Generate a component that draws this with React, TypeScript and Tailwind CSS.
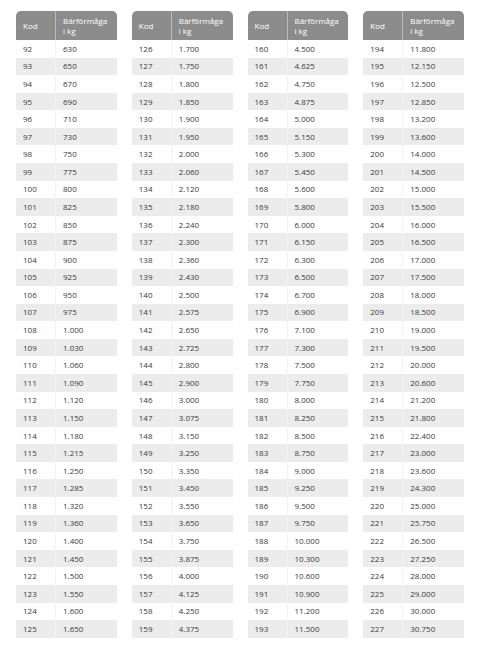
const tables: [number, string[]][] = [
  [92, ["630", "650", "670", "690", "710", "730", "750", "775", "800", "825", "850", "875", "900", "925", "950", "975", "1.000", "1.030", "1.060", "1.090", "1.120", "1.150", "1.180", "1.215", "1.250", "1.285", "1.320", "1.360", "1.400", "1.450", "1.500", "1.550", "1.600", "1.650"]],
  [126, ["1.700", "1.750", "1.800", "1.850", "1.900", "1.950", "2.000", "2.060", "2.120", "2.180", "2.240", "2.300", "2.360", "2.430", "2.500", "2.575", "2.650", "2.725", "2.800", "2.900", "3.000", "3.075", "3.150", "3.250", "3.350", "3.450", "3.550", "3.650", "3.750", "3.875", "4.000", "4.125", "4.250", "4.375"]],
  [160, ["4.500", "4.625", "4.750", "4.875", "5.000", "5.150", "5.300", "5.450", "5.600", "5.800", "6.000", "6.150", "6.300", "6.500", "6.700", "6.900", "7.100", "7.300", "7.500", "7.750", "8.000", "8.250", "8.500", "8.750", "9.000", "9.250", "9.500", "9.750", "10.000", "10.300", "10.600", "10.900", "11.200", "11.500"]],
  [194, ["11.800", "12.150", "12.500", "12.850", "13.200", "13.600", "14.000", "14.500", "15.000", "15.500", "16.000", "16.500", "17.000", "17.500", "18.000", "18.500", "19.000", "19.500", "20.000", "20.600", "21.200", "21.800", "22.400", "23.000", "23.600", "24.300", "25.000", "25.750", "26.500", "27.250", "28.000", "29.000", "30.000", "30.750"]],
];

function LoadTable({ start, values }: { start: number; values: string[] }) {
  return (
    <div className="flex flex-col">
      <div className="flex h-[29px] rounded-t-[5px] bg-[#8c8c8c] text-white">
        <div className="flex w-[40px] items-center border-r border-white/40 pl-[7px]">Kod</div>
        <div className="flex flex-1 flex-col justify-center pl-[7px] leading-[10px]">
          <span>Bärförmåga</span>
          <span>i kg</span>
        </div>
      </div>
      {values.map((v, i) => (
        <div
          key={v}
          className={`flex h-[17.58px] items-center text-[#3a3a3a] ${i % 2 ? "bg-[#ececec]" : "bg-white"}`}
        >
          <div className="flex h-full w-[40px] items-center border-r border-[#f3f3f3] pl-[7px]">{start + i}</div>
          <div className="pl-[7px]">{v}</div>
        </div>
      ))}
    </div>
  );
}

export default function App() {
  return (
    <div className="min-h-[655px] w-[480px] bg-white px-4 pt-[11px] font-['Open_Sans',sans-serif] text-[8px]">
      <div className="grid grid-cols-4 gap-[15px]">
        {tables.map(([start, values]) => (
          <LoadTable key={start} start={start} values={values} />
        ))}
      </div>
    </div>
  );
}
